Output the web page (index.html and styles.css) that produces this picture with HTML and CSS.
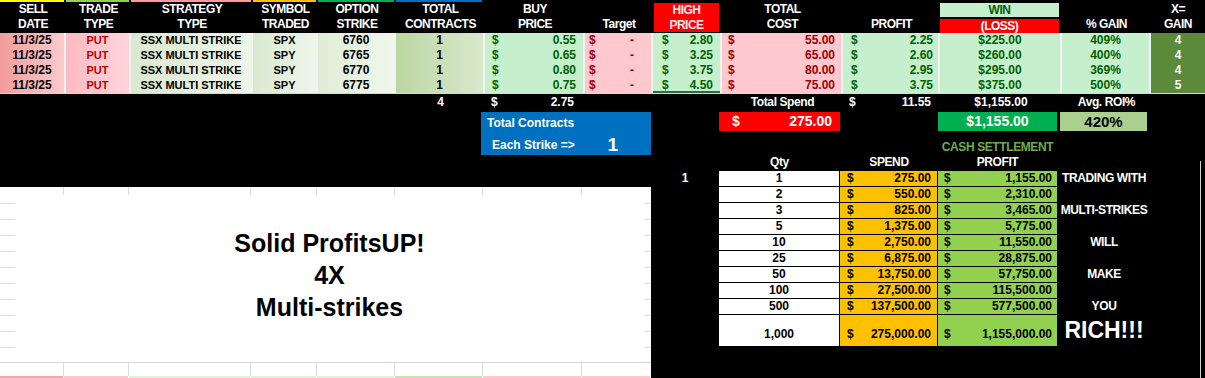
FILE: index.html
```html
<!DOCTYPE html>
<html>
<head>
<meta charset="utf-8">
<link rel="stylesheet" href="styles.css">
</head>
<body>
<div class="sheet">
  <div class="top">
    <div class="h bar bar-y">SELL<br>DATE</div>
    <div class="h bar bar-g">TRADE<br>TYPE</div>
    <div class="h bar bar-p">STRATEGY<br>TYPE</div>
    <div class="h bar bar-o">SYMBOL<br>TRADED</div>
    <div class="h bar bar-g2">OPTION<br>STRIKE</div>
    <div class="h bar bar-b">TOTAL<br>CONTRACTS</div>
    <div class="h">BUY<br>PRICE</div>
    <div class="h"><br>Target</div>
    <div class="h hp"><div class="hp-box">HIGH<br>PRICE</div></div>
    <div class="h">TOTAL<br>COST</div>
    <div class="h"><br>PROFIT</div>
    <div class="h wl"><div class="win-h">WIN</div><div class="loss-h">(LOSS)</div></div>
    <div class="h"><br>% GAIN</div>
    <div class="h">X=<br>GAIN</div>

    <div class="d n date">11/3/25</div>
    <div class="d type">PUT</div>
    <div class="d strat">SSX MULTI STRIKE</div>
    <div class="d strat">SPX</div>
    <div class="d n strike">6760</div>
    <div class="d n ctr">1</div>
    <div class="d n acc good buy"><span>$</span><span>0.55</span></div>
    <div class="d n acc bad tgt"><span>$</span><span>-</span></div>
    <div class="d n acc good high"><span>$</span><span>2.80</span></div>
    <div class="d n acc bad cost"><span>$</span><span>55.00</span></div>
    <div class="d n acc good prof"><span>$</span><span>2.25</span></div>
    <div class="d n good">$225.00</div>
    <div class="d n good">409%</div>
    <div class="d n xg">4</div>

    <div class="d n date">11/3/25</div>
    <div class="d type">PUT</div>
    <div class="d strat">SSX MULTI STRIKE</div>
    <div class="d strat">SPY</div>
    <div class="d n strike">6765</div>
    <div class="d n ctr">1</div>
    <div class="d n acc good buy"><span>$</span><span>0.65</span></div>
    <div class="d n acc bad tgt"><span>$</span><span>-</span></div>
    <div class="d n acc good high"><span>$</span><span>3.25</span></div>
    <div class="d n acc bad cost"><span>$</span><span>65.00</span></div>
    <div class="d n acc good prof"><span>$</span><span>2.60</span></div>
    <div class="d n good">$260.00</div>
    <div class="d n good">400%</div>
    <div class="d n xg">4</div>

    <div class="d n date">11/3/25</div>
    <div class="d type">PUT</div>
    <div class="d strat">SSX MULTI STRIKE</div>
    <div class="d strat">SPY</div>
    <div class="d n strike">6770</div>
    <div class="d n ctr">1</div>
    <div class="d n acc good buy"><span>$</span><span>0.80</span></div>
    <div class="d n acc bad tgt"><span>$</span><span>-</span></div>
    <div class="d n acc good high"><span>$</span><span>3.75</span></div>
    <div class="d n acc bad cost"><span>$</span><span>80.00</span></div>
    <div class="d n acc good prof"><span>$</span><span>2.95</span></div>
    <div class="d n good">$295.00</div>
    <div class="d n good">369%</div>
    <div class="d n xg">4</div>

    <div class="d n date">11/3/25</div>
    <div class="d type">PUT</div>
    <div class="d strat">SSX MULTI STRIKE</div>
    <div class="d strat">SPY</div>
    <div class="d n strike">6775</div>
    <div class="d n ctr">1</div>
    <div class="d n acc good buy"><span>$</span><span>0.75</span></div>
    <div class="d n acc bad tgt"><span>$</span><span>-</span></div>
    <div class="d n acc good high sel"><span>$</span><span>4.50</span></div>
    <div class="d n acc bad cost"><span>$</span><span>75.00</span></div>
    <div class="d n acc good prof"><span>$</span><span>3.75</span></div>
    <div class="d n good">$375.00</div>
    <div class="d n good">500%</div>
    <div class="d n xg">5</div>

    <div class="sep"></div>

    <div class="t"></div>
    <div class="t"></div>
    <div class="t"></div>
    <div class="t"></div>
    <div class="t"></div>
    <div class="t n">4</div>
    <div class="t n acc tbuy"><span>$</span><span>2.75</span></div>
    <div class="t"></div>
    <div class="t"></div>
    <div class="t lbl">Total Spend</div>
    <div class="t n acc tprof"><span>$</span><span>11.55</span></div>
    <div class="t n">$1,155.00</div>
    <div class="t lbl">Avg. ROI%</div>
    <div class="t"></div>
  </div>

  <div class="lower">
    <div class="left">
      <div class="band">
        <div class="blue">
          <div class="blue-l1">Total Contracts</div>
          <div class="blue-l2"><span>Each Strike =&gt;</span><span class="big1">1</span></div>
        </div>
      </div>
      <div class="white">
        <div class="gl-strip">
          <i style="width:64px"></i><i style="width:65px"></i><i style="width:122px"></i><i style="width:66px"></i><i style="width:78px"></i><i style="width:88px"></i><i style="width:99px"></i><i class="last"></i>
        </div>
        <div class="mid">
          <div class="ticks"></div>
          <div class="promo">Solid ProfitsUP!<br>4X<br>Multi-strikes</div>
          <div class="ticks r"></div>
        </div>
        <div class="gl-strip bottom">
          <i style="width:64px"></i><i style="width:65px"></i><i style="width:122px"></i><i style="width:66px"></i><i style="width:78px"></i><i style="width:88px"></i><i style="width:99px"></i><i class="last"></i>
        </div>
        <div class="color-strip">
          <i class="s1" style="width:64px"></i><i class="s2" style="width:65px"></i><i class="s3" style="width:122px"></i><i class="s3" style="width:66px"></i><i class="s3" style="width:78px"></i><i class="s4" style="width:88px"></i><i class="s2" style="width:99px"></i><i class="s2 last"></i>
        </div>
      </div>
    </div>

    <div class="right">
      <div></div>
      <div class="box red n"><span>$</span><span>275.00</span></div>
      <div></div>
      <div class="box gbox n">$1,155.00</div>
      <div class="box lgbox n">420%</div>
      <div></div>

      <div></div><div></div><div></div>
      <div class="cs">CASH SETTLEMENT</div>
      <div></div><div></div>

      <div></div>
      <div class="ch">Qty</div>
      <div class="ch">SPEND</div>
      <div class="ch">PROFIT</div>
      <div></div><div></div>

      <div class="side n">1</div>
      <div class="q n">1</div>
      <div class="sp n"><span>$</span><span>275.00</span></div>
      <div class="pf n"><span>$</span><span>1,155.00</span></div>
      <div class="msg">TRADING WITH</div>
      <div></div>

      <div></div>
      <div class="q n">2</div>
      <div class="sp n"><span>$</span><span>550.00</span></div>
      <div class="pf n"><span>$</span><span>2,310.00</span></div>
      <div class="msg"></div>
      <div></div>

      <div></div>
      <div class="q n">3</div>
      <div class="sp n"><span>$</span><span>825.00</span></div>
      <div class="pf n"><span>$</span><span>3,465.00</span></div>
      <div class="msg">MULTI-STRIKES</div>
      <div></div>

      <div></div>
      <div class="q n">5</div>
      <div class="sp n"><span>$</span><span>1,375.00</span></div>
      <div class="pf n"><span>$</span><span>5,775.00</span></div>
      <div class="msg"></div>
      <div></div>

      <div></div>
      <div class="q n">10</div>
      <div class="sp n"><span>$</span><span>2,750.00</span></div>
      <div class="pf n"><span>$</span><span>11,550.00</span></div>
      <div class="msg">WILL</div>
      <div></div>

      <div></div>
      <div class="q n">25</div>
      <div class="sp n"><span>$</span><span>6,875.00</span></div>
      <div class="pf n"><span>$</span><span>28,875.00</span></div>
      <div class="msg"></div>
      <div></div>

      <div></div>
      <div class="q n">50</div>
      <div class="sp n"><span>$</span><span>13,750.00</span></div>
      <div class="pf n"><span>$</span><span>57,750.00</span></div>
      <div class="msg">MAKE</div>
      <div></div>

      <div></div>
      <div class="q n">100</div>
      <div class="sp n"><span>$</span><span>27,500.00</span></div>
      <div class="pf n"><span>$</span><span>115,500.00</span></div>
      <div class="msg"></div>
      <div></div>

      <div></div>
      <div class="q n">500</div>
      <div class="sp n"><span>$</span><span>137,500.00</span></div>
      <div class="pf n"><span>$</span><span>577,500.00</span></div>
      <div class="msg">YOU</div>
      <div></div>

      <div></div>
      <div class="q n last">1,000</div>
      <div class="sp n last"><span>$</span><span>275,000.00</span></div>
      <div class="pf n last"><span>$</span><span>1,155,000.00</span></div>
      <div class="msg rich">RICH!!!</div>
      <div></div>
    </div>
  </div>
</div>
</body>
</html>
```

FILE: styles.css
```css
* { box-sizing: border-box; }
html, body { margin: 0; padding: 0; background: #000; }
body {
  font-family: "Liberation Sans", Arial, sans-serif;
  font-weight: bold;
  font-size: 11px;
  color: #fff;
}
.sheet {
  width: 1205px;
  height: 378px;
  overflow: hidden;
  background: #000;
}
.n { font-size: 12px; }

/* ---------- top table ---------- */
.top {
  display: grid;
  grid-template-columns: 66px 65px 122px 65px 78px 89px 100px 68px 69px 121px 97px 122px 89px 54px;
  grid-template-rows: 33px repeat(4, 15px) 1px 17px;
}

.h {
  font-size: 12px;
  letter-spacing: -0.5px;
  text-align: center;
  line-height: 15px;
  padding-top: 2px;
  white-space: nowrap;
  color: #fff;
}
.bar { background-repeat: no-repeat; background-position: 0 0; background-size: calc(100% - 2px) 2px; }
.bar-y { background-image: linear-gradient(#ffff00, #ffff00); }
.bar-g { background-image: linear-gradient(#92d050, #92d050); }
.bar-p { background-image: linear-gradient(#ff9aa2, #ff9aa2); }
.bar-o { background-image: linear-gradient(#ffc000, #ffc000); }
.bar-g2 { background-image: linear-gradient(#00b050, #00b050); }
.bar-b { background-image: linear-gradient(#0070c0, #0070c0); background-size: calc(100% - 3px) 2px; }

.hp { padding: 3px 3px 1px 1px; }
.hp-box {
  background: #ff0000;
  color: #ffecec;
  height: 29px;
  line-height: 14.5px;
}
.wl { padding: 3px 3px 0 0; }
.win-h {
  background: #c6efce;
  color: #006100;
  height: 14px;
  line-height: 14px;
}
.loss-h {
  background: #ff0000;
  color: #fff;
  height: 14px;
  line-height: 14px;
  margin-top: 2px;
}

.d {
  line-height: 15px;
  text-align: center;
  color: #000;
  border-right: 2px solid #f3f3f3;
  white-space: nowrap;
}
.date { background: linear-gradient(90deg, #f19b9b, #fccbcb); }
.type { background: linear-gradient(90deg, #ffbac3, #ffd4d9); color: #c00000; }
.strat { background: linear-gradient(90deg, #d9e9cf, #eef6ea); }
.strike { background: linear-gradient(90deg, #dfedd6, #eff7eb); }
.ctr { background: linear-gradient(90deg, #bcd6a3, #d8e8cb); }
.good { background: #c6efce; color: #006100; }
.bad { background: #ffc7ce; color: #9c0006; }
.xg { background: #5a8a3a; color: #fff; border-right: 0; }

.acc { display: flex; justify-content: space-between; }
.buy { padding: 0 7px 0 7px; }
.tgt { padding: 0 17px 0 4px; }
.high { padding: 0 7px 0 9px; }
.cost { padding: 0 6px 0 6px; }
.prof { padding: 0 5px 0 8px; }
.sel { box-shadow: inset 0 -2px 0 #217346; }

.sep { grid-column: 1 / -1; background: #d9d9d9; }

.t {
  line-height: 17px;
  text-align: center;
  color: #fff;
  white-space: nowrap;
}
.lbl { font-size: 12px; letter-spacing: -0.4px; }
.tbuy { padding: 0 11px 0 6px; }
.tprof { padding: 0 9px 0 6px; }

/* ---------- lower area ---------- */
.lower { display: flex; }
.left { width: 651px; flex: none; }
.band { height: 76px; padding-top: 1px; }
.blue {
  margin-left: 481px;
  width: 170px;
  height: 43px;
  background: #0070c0;
  color: #fff;
  font-size: 12px;
}
.blue-l1 { height: 23px; line-height: 23px; padding-left: 6px; }
.blue-l2 {
  height: 20px;
  display: flex;
  align-items: center;
  padding-left: 11px;
}
.big1 { margin-left: auto; margin-right: 33px; font-size: 19px; }

.white {
  height: 191px;
  background: #fff;
  display: flex;
  flex-direction: column;
}
.gl-strip { display: flex; height: 8px; flex: none; }
.gl-strip i { display: block; height: 100%; border-right: 1px solid #dcdcdc; flex: none; }
.gl-strip i.last { flex: 1; border-right: 0; }
.gl-strip.bottom { height: 14px; border-top: 1px solid #d6d6d6; }
.mid { flex: 1; display: flex; }
.ticks {
  width: 15px;
  background: repeating-linear-gradient(to bottom, transparent 0 15px, #e0e0e0 15px 16px);
  background-position: 0 -7px;
}
.ticks.r { width: 7px; }
.promo {
  flex: 1;
  color: #000;
  font-size: 25px;
  line-height: 32px;
  text-align: center;
  padding-top: 32px;
}
.color-strip { display: flex; height: 2px; flex: none; }
.color-strip i { display: block; height: 100%; flex: none; border-right: 1px solid #fff; }
.color-strip i.last { flex: 1; }
.s1 { background: #f4a7a7; }
.s2 { background: #ffc7ce; }
.s3 { background: #e2efda; }
.s4 { background: #c9dfb4; }

.right {
  flex: 1;
  display: grid;
  grid-template-columns: 68px 121px 98px 119px 94px 1fr;
  grid-template-rows: 19px 24px 15px repeat(9, 16px) 33px;
  padding-top: 1px;
  align-content: start;
  background: linear-gradient(#cfcfcf, #cfcfcf) no-repeat right 4px top 50px / 1px 100%;
}
.box { color: #fff; line-height: 19px; font-size: 14px; white-space: nowrap; }
.red { background: #ff0000; display: flex; justify-content: space-between; padding: 0 8px 0 13px; }
.gbox { background: #00b050; text-align: center; }
.lgbox { background: #a9d08e; color: #000; text-align: center; margin: 0 4px 0 3px; font-size: 15px; }
.cs {
  color: #70ad47;
  font-size: 12px;
  letter-spacing: -0.4px;
  text-align: center;
  white-space: nowrap;
  padding-top: 9px;
  line-height: 14px;
}
.ch { font-size: 12px; letter-spacing: -0.4px; text-align: center; line-height: 15px; color: #fff; }

.side { text-align: center; line-height: 16px; color: #fff; }
.q, .sp, .pf {
  color: #000;
  border-top: 1px solid #000;
  line-height: 15px;
  white-space: nowrap;
}
.q { background: #fff; text-align: center; border-right: 1px solid #000; }
.sp { background: #ffc000; display: flex; justify-content: space-between; padding: 0 6px 0 7px; border-right: 1px solid #000; }
.pf { background: #92d050; display: flex; justify-content: space-between; padding: 0 5px 0 6px; }
.q.last, .sp.last, .pf.last {
  border-bottom: 1px solid #000;
  display: flex;
  align-items: flex-end;
  padding-bottom: 4px;
}
.q.last { justify-content: center; }
.msg {
  font-size: 12px;
  letter-spacing: -0.4px;
  text-align: center;
  line-height: 16px;
  color: #fff;
  white-space: nowrap;
}
.msg.rich { font-size: 23px; letter-spacing: 0; line-height: 33px; }
```
